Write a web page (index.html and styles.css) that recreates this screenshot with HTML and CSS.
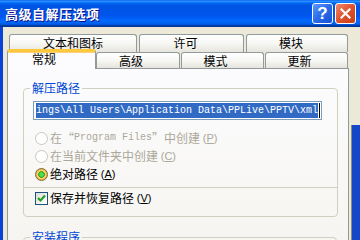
FILE: index.html
```html
<!DOCTYPE html>
<html lang="zh-CN">
<head>
  <meta charset="UTF-8">
  <title>高级自解压选项</title>
  <link rel="stylesheet" href="styles.css">
</head>
<body>

  <div class="titlebar">
    <span class="title">高级自解压选项</span>
    <div class="caption-buttons">
      <span class="cap-btn help">?</span>
      <span class="cap-btn close">
        <svg width="11" height="11" viewBox="0 0 11 11"><path d="M1.5 1.5 L9.5 9.5 M9.5 1.5 L1.5 9.5" stroke="#fff" stroke-width="2.2" stroke-linecap="square"/></svg>
      </span>
    </div>
  </div>

  <div class="frame">
    <div class="main">
      <div class="tab-row back">
        <div class="tab first">文本和图标</div>
        <div class="tab mid">许可</div>
        <div class="tab last">模块</div>
      </div>
      <div class="tab-row front">
        <div class="tab active">常规</div>
        <div class="tab t2">高级</div>
        <div class="tab t3">模式</div>
        <div class="tab t4">更新</div>
      </div>

      <div class="panel">
        <fieldset class="group">
          <legend>解压路径</legend>
          <div class="path-field"><span class="selected">ings\All Users\Application Data\PPLive\PPTV\xml</span><span class="caret"></span></div>

          <div class="option disabled"><span class="radio"></span>在“<span class="mono">Program Files</span>”中创建 <span class="key">(<u>P</u>)</span></div>
          <div class="option disabled"><span class="radio"></span>在当前文件夹中创建 <span class="key">(<u>C</u>)</span></div>
          <div class="option"><span class="radio checked"></span>绝对路径 <span class="key">(<u>A</u>)</span></div>

          <div class="divider"></div>

          <div class="option">
            <span class="check"><svg width="11" height="11" viewBox="0 0 11 11"><path d="M2 5 L4.5 7.5 L9 2.5" fill="none" stroke="#21A121" stroke-width="2.2"/></svg></span>保存并恢复路径 <span class="key">(<u>V</u>)</span>
          </div>
        </fieldset>

        <fieldset class="group second">
          <legend>安装程序</legend>
        </fieldset>
      </div>
    </div>
    <div class="side"><div class="side-blue"></div></div>
  </div>

</body>
</html>
```

FILE: styles.css
```css
body {
  margin: 0;
  width: 360px;
  height: 240px;
  overflow: hidden;
  background-color: #ECE9D8;
  font-family: "Noto Sans CJK SC", sans-serif;
  font-size: 12px;
  color: #000;
}

/* title bar */
.titlebar {
  height: 27px;
  display: flex;
  align-items: center;
  padding: 0 4px 0 5px;
  background: linear-gradient(to bottom, #0058EE 0%, #3593FF 4%, #288EFF 6%, #127DFF 8%, #036FFC 10%, #0262EE 14%, #0057E5 20%, #0054E3 24%, #0055EB 56%, #005BF5 66%, #026AFE 76%, #0062EF 86%, #0052D6 92%, #0040AB 94%, #003092 100%);
}

.title {
  color: #fff;
  font-weight: bold;
  font-size: 13px;
  letter-spacing: 0.5px;
  line-height: 16px;
  text-shadow: 1px 1px #0F1089;
}

.caption-buttons {
  margin-left: auto;
  display: flex;
  gap: 2px;
}

.cap-btn {
  box-sizing: border-box;
  width: 21px;
  height: 21px;
  border: 1px solid #fff;
  border-radius: 3px;
  display: flex;
  align-items: center;
  justify-content: center;
}

.help {
  background: linear-gradient(135deg, #5C97FF 0%, #2A6BE8 50%, #1650D6 100%);
  color: #fff;
  font-family: "Liberation Sans", sans-serif;
  font-weight: bold;
  font-size: 17px;
  line-height: 19px;
}

.close {
  background: linear-gradient(135deg, #F08A6C 0%, #E0512C 50%, #C83D17 100%);
}

/* window body */
.frame {
  display: flex;
  height: 213px;
  overflow: hidden;
  border-left: 3px solid #0842D6;
}

.main {
  width: 342px;
  margin-left: 4px;
  padding-top: 7px;
}

.side {
  width: 11px;
  display: flex;
  flex-direction: column;
}

.side-blue {
  margin-top: 98px;
  margin-left: 2px;
  flex: 1;
  border-left: 1px solid #8C8A7E;
  background: #1446C8;
}

/* tabs */
.tab-row {
  display: flex;
}

.tab-row.back {
  height: 18px;
  padding-left: 2px;
  gap: 2px;
}

.tab-row.front {
  height: 16px;
  position: relative;
  z-index: 1;
}

.tab {
  box-sizing: border-box;
  height: 100%;
  border: 1px solid #919B9C;
  border-bottom: 0;
  border-radius: 3px 3px 0 0;
  background: linear-gradient(to bottom, #FFFFFF 0%, #F7F7F4 50%, #E6E4DC 100%);
  text-align: center;
  line-height: 16px;
}

.back .first { width: 128px; }
.back .mid { width: 105px; padding-right: 12px; }
.back .last { width: 102px; padding-right: 12px; }

.front .tab {
  width: 83px;
  padding-right: 14px;
  margin-left: 1px;
}

.front .t2 {
  width: 84px;
  margin-left: 0;
}

.front .active {
  width: 89px;
  height: 20px;
  margin-top: -3px;
  margin-left: 0;
  padding-right: 15px;
  background: #FCFCFE;
  border-top: 3px solid #FFC83C;
  box-shadow: inset 0 1px 0 #F9D27A;
  line-height: 13px;
}

.panel {
  box-sizing: border-box;
  height: 172px;
  overflow: hidden;
  border: 1px solid #919B9C;
  border-bottom: 0;
  padding: 0 11px 0 15px;
  background: linear-gradient(to bottom, #FCFCFE 0%, #F6F5F1 100%);
}

/* group boxes */
.group {
  margin: 12px 0 0;
  padding: 6px 15px 9px 9px;
  border: 1px solid #D0D0BF;
  border-radius: 4px;
}

.group legend {
  margin-left: -3px;
  padding: 0 2px;
  color: #0046D5;
  line-height: 14px;
}

.group.second {
  margin-top: 13px;
  height: 30px;
}

.path-field {
  box-sizing: border-box;
  height: 19px;
  border: 1px solid #7F9DB9;
  background: #fff;
  padding: 1px;
  display: flex;
}

.selected {
  margin-left: 1px;
  background: #316AC5;
  color: #fff;
  font-family: "Liberation Mono", monospace;
  font-size: 10px;
  line-height: 15px;
  white-space: nowrap;
}

.caret {
  width: 1px;
  height: 15px;
  margin-left: 1px;
  background: #000;
}

.option {
  height: 18px;
  display: flex;
  align-items: center;
  line-height: 14px;
  white-space: pre;
}

.path-field + .option {
  margin-top: 9px;
}

.option.disabled {
  color: #ACA899;
}

.mono {
  font-family: "Liberation Mono", monospace;
  font-size: 10px;
}

.key {
  font-family: "Liberation Sans", sans-serif;
  font-size: 11px;
}

.radio {
  box-sizing: border-box;
  width: 13px;
  height: 13px;
  margin: 0 2px 0 2px;
  border: 1px solid #1C5180;
  border-radius: 50%;
  background: linear-gradient(135deg, #DCD9CB 0%, #FFFFFF 80%);
}

.disabled .radio {
  border-color: #CAC8BB;
  background: #fff;
}

.radio.checked {
  background: radial-gradient(circle, #5ADB4A 0 2px, #21A121 2.5px 3px, #F8D36A 3.5px 4.5px, #F5B33A 5px);
  border-color: #7A6A3C;
}

.check {
  box-sizing: border-box;
  width: 13px;
  height: 13px;
  margin: 0 2px 0 2px;
  border: 1px solid #1C5180;
  background: linear-gradient(135deg, #DCDCD7 0%, #FFFFFF 90%);
  display: flex;
  align-items: center;
  justify-content: center;
}

.divider {
  margin: 4px -15px 1px -9px;
  border-top: 1px solid #D0D0BF;
}
```
